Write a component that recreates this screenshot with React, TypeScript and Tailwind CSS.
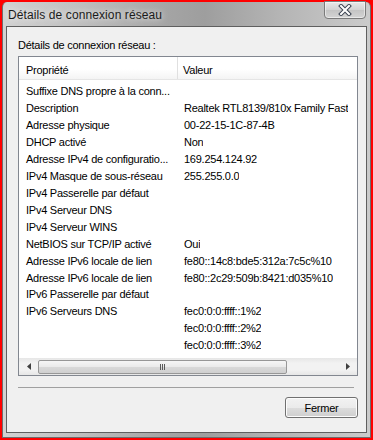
import React from "react";

const rows: [string, string][] = [
  ["Suffixe DNS propre à la conn...", ""],
  ["Description", "Realtek RTL8139/810x Family Fast"],
  ["Adresse physique", "00-22-15-1C-87-4B"],
  ["DHCP activé", "Non"],
  ["Adresse IPv4 de configuratio...", "169.254.124.92"],
  ["IPv4 Masque de sous-réseau", "255.255.0.0"],
  ["IPv4 Passerelle par défaut", ""],
  ["IPv4 Serveur DNS", ""],
  ["IPv4 Serveur WINS", ""],
  ["NetBIOS sur TCP/IP activé", "Oui"],
  ["Adresse IPv6 locale de lien", "fe80::14c8:bde5:312a:7c5c%10"],
  ["Adresse IPv6 locale de lien", "fe80::2c29:509b:8421:d035%10"],
  ["IPv6 Passerelle par défaut", ""],
  ["IPv6 Serveurs DNS", "fec0:0:0:ffff::1%2"],
  ["", "fec0:0:0:ffff::2%2"],
  ["", "fec0:0:0:ffff::3%2"],
];

function CloseGlyph() {
  return (
    <svg width="14" height="12" viewBox="0 0 14 12">
      <path d="M3 2 L11 10 M11 2 L3 10" stroke="#3c4452" strokeWidth="4" strokeLinecap="square" />
      <path d="M3 2 L11 10 M11 2 L3 10" stroke="#ffffff" strokeWidth="2" strokeLinecap="square" />
    </svg>
  );
}

export default function App() {
  return (
    <div className="w-[373px] h-[440px] bg-[#ff0000] p-[2px] font-['Liberation_Sans',Arial,sans-serif] text-black">
      <div className="h-full w-full flex flex-col bg-[linear-gradient(90deg,#d2d2d2_0%,#c0c0c0_20%,#a4a4a4_45%,#9e9e9e_55%,#b4b4b4_75%,#cbcbcb_100%)] border-x border-b border-[#6d6d6d] rounded-t-[5px]">
        {/* Title bar */}
        <div className="h-[24px] flex items-start justify-between pl-[5px] pr-[4px]">
          <span className="mt-[6px] text-[12px] leading-[15px] text-[#1b1b1b] tracking-[0.1px] [text-shadow:0_0_6px_#ffffff]">
            Détails de connexion réseau
          </span>
          <div className="w-[42px] h-[18px] -mt-px rounded-b-[4px] border border-[#7a7a7a] bg-[linear-gradient(180deg,#e8e8e8,#d2d2d2_50%,#c4c4c4_51%,#d4d4d4)] shadow-[inset_0_0_0_1px_rgba(255,255,255,0.5)] flex items-center justify-center">
            <CloseGlyph />
          </div>
        </div>

        {/* Client area */}
        <div className="flex-1 mx-[3px] mb-[4px] border border-[#5f5f5f] bg-[#f0f0f0] flex flex-col pl-[11px] text-[11px] tracking-[-0.25px]">
          <div className="mt-[10px] h-[16px] leading-[16px]">Détails de connexion réseau :</div>

          <div className="mt-[3px] w-[340px] h-[320px] border border-[#828790] bg-white flex flex-col">
            <div className="h-[23px] shrink-0 flex border-b border-[#e5e5e5] bg-[linear-gradient(180deg,#ffffff,#ffffff_55%,#f4f4f4)]">
              <div className="w-[159px] shrink-0 pl-[7px] pt-[6px] leading-[14px] border-r border-[#e0e0e0]">Propriété</div>
              <div className="pl-[5px] pt-[6px] leading-[14px]">Valeur</div>
            </div>
            <div className="flex-1 pt-[3px] overflow-hidden">
              {rows.map(([k, v], i) => (
                <div key={i} className="h-[16.95px] flex items-center whitespace-nowrap">
                  <div className="w-[159px] shrink-0 pl-[7px] overflow-hidden">{k}</div>
                  <div className="pl-[6px] overflow-hidden">{v}</div>
                </div>
              ))}
            </div>
            {/* Horizontal scrollbar */}
            <div className="h-[17px] shrink-0 flex items-center bg-[linear-gradient(180deg,#e6e6e6,#f2f2f2_30%,#f2f2f2_70%,#e6e6e6)]">
              <div className="w-[19px] h-full flex items-center justify-center">
                <svg width="4" height="7" viewBox="0 0 4 7">
                  <path d="M4 0 L0 3.5 L4 7 Z" fill="#404040" />
                </svg>
              </div>
              <div className="w-[249px] h-[14px] rounded-[2px] border border-[#979797] bg-[linear-gradient(180deg,#f6f6f6,#eaeaea_50%,#d9d9d9_51%,#d0d0d0)] flex items-center justify-center">
                <div className="flex gap-[1px]">
                  <span className="w-[1px] h-[6px] bg-[#5a5a5a]" />
                  <span className="w-[1px] h-[6px] bg-[#5a5a5a]" />
                  <span className="w-[1px] h-[6px] bg-[#5a5a5a]" />
                </div>
              </div>
              <div className="flex-1" />
              <div className="w-[19px] h-full flex items-center justify-center">
                <svg width="4" height="7" viewBox="0 0 4 7">
                  <path d="M0 0 L4 3.5 L0 7 Z" fill="#404040" />
                </svg>
              </div>
            </div>
          </div>

          <div className="mt-[11px] w-[336px] h-px bg-[#a0a0a0]" />

          <div className="mt-[9px] w-[340px] flex justify-end">
            <button className="w-[73px] h-[21px] rounded-[3px] border border-[#707070] bg-[linear-gradient(180deg,#f2f2f2,#ebebeb_50%,#dddddd_51%,#cfcfcf)] shadow-[inset_0_0_0_1px_#fcfcfc] text-[11px] leading-[18px] text-black">
              Fermer
            </button>
          </div>
        </div>
      </div>
    </div>
  );
}
